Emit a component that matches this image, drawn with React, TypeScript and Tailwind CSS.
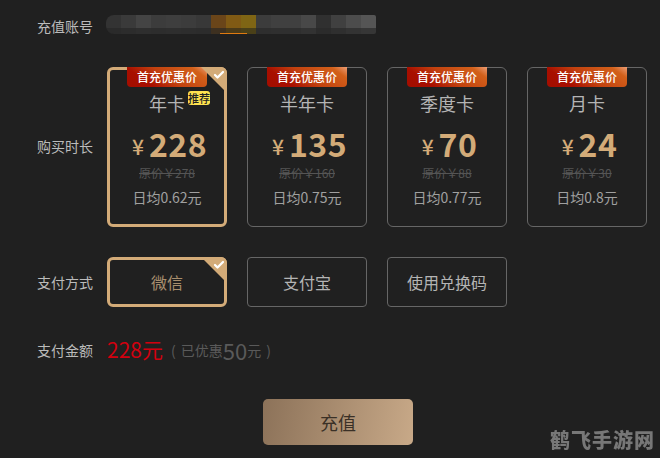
import { Check } from 'lucide-react';

const blurTop = ['#333333', '#3a3a3a', '#444444', '#3c3c3c', '#3e3e3e', '#3c3c3c', '#383838', '#6a4519', '#805a14', '#7f6514', '#3c3c3c', '#404040', '#404040', '#484848', '#303030', '#404040', '#4c4c4c', '#555555'];
const blurBottom = ['#2a2a2a', '#2c2c2c', '#2e2e2e', '#2d2d2d', '#2e2e2e', '#2d2d2d', '#2c2c2c', '#3d3020', '#4a3a18', '#4a4018', '#2e2e2e', '#2f2f2f', '#2f2f2f', '#323232', '#2b2b2b', '#2f2f2f', '#333333', '#363636'];

const plans = [
  { name: '年卡', price: '228', origin: '278', daily: '0.62', active: true },
  { name: '半年卡', price: '135', origin: '160', daily: '0.75', active: false },
  { name: '季度卡', price: '70', origin: '88', daily: '0.77', active: false },
  { name: '月卡', price: '24', origin: '30', daily: '0.8', active: false },
];

function Corner() {
  return (
    <div className="absolute -top-[3px] -right-[3px] h-[26px] w-[26px] overflow-hidden rounded-tr-[6px]">
      <div className="h-full w-full bg-[#d3ab78] [clip-path:polygon(0_0,100%_0,100%_100%)]" />
      <Check className="absolute top-[2px] right-[2px] h-[12px] w-[12px] text-white" strokeWidth={4.5} />
    </div>
  );
}

function PlanCard({ name, price, origin, daily, active }: (typeof plans)[number]) {
  return (
    <div
      className={
        active
          ? 'relative flex h-[160px] w-[120px] flex-col items-center rounded-[6px] border-[3px] border-[#d3ab78]'
          : 'relative flex h-[160px] w-[120px] flex-col items-center rounded-[6px] border border-[#666666]'
      }
    >
      <div
        className={
          (active ? '-top-[3px] ' : '-top-px ') +
          'absolute left-1/2 flex h-[20px] w-[80px] -translate-x-1/2 items-center justify-center rounded-b-[4px] bg-[linear-gradient(35deg,#a30d00_0%,#a80f00_25%,#c2410f_50%,#d2601a_85%,#ec9d75_100%)] text-[12px] font-medium text-white'
        }
      >
        首充优惠价
      </div>
      {active && <Corner />}
      {active && (
        <div className="absolute top-[21px] right-[14px] flex h-[14px] w-[22px] items-center justify-center rounded-[3px] bg-[#ffe24f] text-[11px] leading-none font-medium text-[#222222]">
          推荐
        </div>
      )}
      <div className={(active ? 'mt-[20px] ' : 'mt-[22px] ') + 'text-[18px] leading-[27px] text-[#b4b4b4]'}>{name}</div>
      <div className="mt-[8px] ml-[5px] flex h-[36px] items-center text-[#d3ab78]">
        <span className="mt-[7px] mr-[5px] text-[21px] leading-none font-medium">¥</span>
        <span className="text-[32px] leading-none font-bold tracking-[0.5px]">{price}</span>
      </div>
      <div className="mt-[4px] text-[12px] leading-[16px] text-[#555555] line-through">原价￥{origin}</div>
      <div className="mt-[6px] text-[14px] leading-[20px] text-[#a0a0a0]">日均{daily}元</div>
    </div>
  );
}

function PayOption({ label, active }: { label: string; active?: boolean }) {
  return (
    <div
      className={
        active
          ? 'relative flex h-[50px] w-[120px] items-center justify-center rounded-[6px] border-[3px] border-[#d3ab78] text-[16px] text-[#a88f6e]'
          : 'flex h-[50px] w-[120px] items-center justify-center rounded-[4px] border border-[#666666] text-[16px] text-[#b4b4b4]'
      }
    >
      {label}
      {active && <Corner />}
    </div>
  );
}

export default function App() {
  return (
    <div className="relative h-[458px] w-[660px] overflow-hidden bg-[#202020] pl-[37px] font-['Noto_Sans_CJK_SC','Noto_Sans',sans-serif]">
      {/* Account */}
      <div className="flex h-[67px] pt-[15px]">
        <div className="w-[69px] pt-[2px] text-[14px] leading-[18px] text-[#bbbbbb]">充值账号</div>
        <div className="relative h-[19px] w-[270px] overflow-hidden rounded-l-[8px] rounded-r-[2px]">
          <div className="flex h-[13px]">
            {blurTop.map((c, i) => (
              <div key={i} className="h-full w-[15px]" style={{ backgroundColor: c }} />
            ))}
          </div>
          <div className="flex h-[6px]">
            {blurBottom.map((c, i) => (
              <div key={i} className="h-full w-[15px]" style={{ backgroundColor: c }} />
            ))}
          </div>
          <div className="absolute bottom-0 left-[114px] h-px w-[27px] bg-[#e07a10]" />
        </div>
      </div>

      {/* Plans */}
      <div className="flex items-center">
        <div className="mb-[2px] w-[70px] text-[14px] text-[#bbbbbb]">购买时长</div>
        <div className="flex gap-[20px]">
          {plans.map((p) => (
            <PlanCard key={p.name} {...p} />
          ))}
        </div>
      </div>

      {/* Payment */}
      <div className="mt-[30px] flex items-center">
        <div className="w-[70px] text-[14px] text-[#bbbbbb]">支付方式</div>
        <div className="flex gap-[20px]">
          <PayOption label="微信" active />
          <PayOption label="支付宝" />
          <PayOption label="使用兑换码" />
        </div>
      </div>

      {/* Amount */}
      <div className="mt-[29px] flex h-[28px] items-center">
        <div className="w-[70px] text-[14px] text-[#bbbbbb]">支付金额</div>
        <span className="text-[21px] text-[#d2000f]">228元</span>
        <span className="ml-[8px] flex items-center text-[14px] text-[#5a5a5a]">
          <span className="mr-[5px]">(</span>
          <span className="flex items-center">
            已优惠<span className="text-[22px] leading-[28px]">50</span>元
          </span>
          <span className="ml-[5px]">)</span>
        </span>
      </div>

      {/* Submit */}
      <div className="mt-[35px] ml-[226px] flex h-[46px] w-[150px] items-center justify-center rounded-[5px] bg-[linear-gradient(100deg,#8c7259,#c8a988)] text-[18px] text-[#3a3026]">
        充值
      </div>

      {/* Watermark */}
      <div className="absolute right-[5px] bottom-[7px] text-[20px] leading-[22px] font-black tracking-[1px] text-[#777777] blur-[0.5px]">
        鹤飞手游网
      </div>
    </div>
  );
}
